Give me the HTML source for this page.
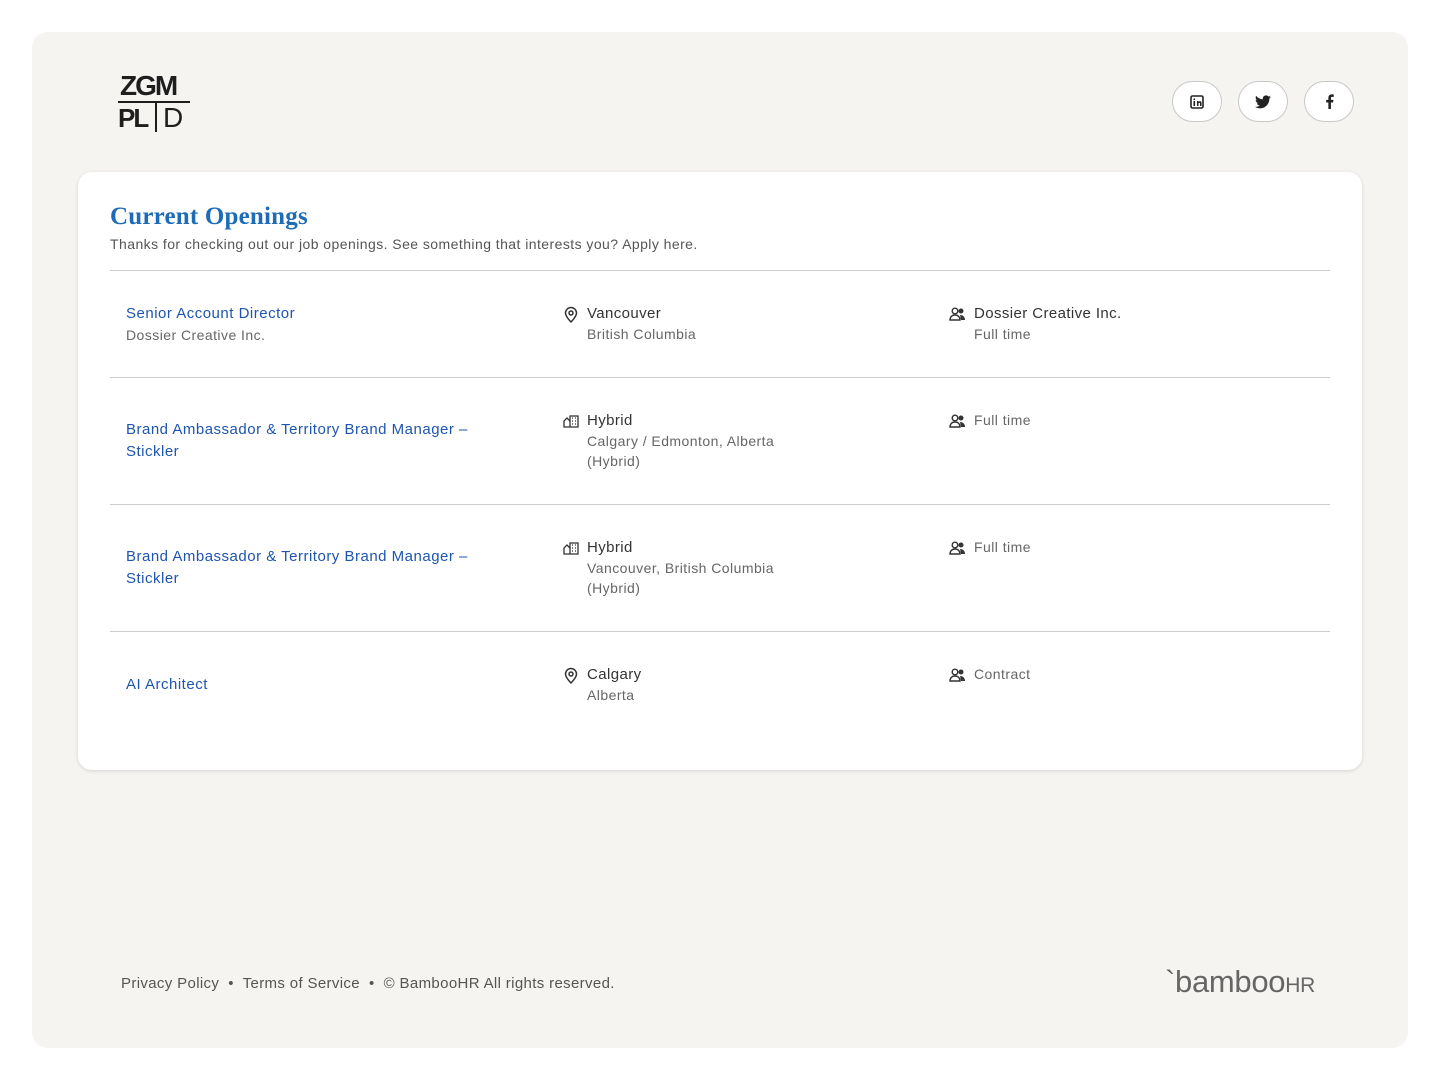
<!DOCTYPE html>
<html><head><meta charset="utf-8"><style>
*{box-sizing:border-box;margin:0;padding:0}
body{width:1440px;height:1080px;background:#fff;font-family:"Liberation Sans",sans-serif;position:relative;overflow:hidden}
.outer{position:absolute;left:32px;top:32px;width:1376px;height:1016px;background:#f5f4f1;border-radius:16px}
.logo{position:absolute;left:118px;top:72px;width:72px;height:60px;font-family:"Liberation Sans",sans-serif;font-weight:900;color:#1e1e1e}
.soc{position:absolute;top:81px;width:50px;height:41px;border:1px solid #c8c8c8;border-radius:21px;background:#fff;display:flex;align-items:center;justify-content:center}
.card{position:absolute;left:78px;top:172px;width:1284px;height:598px;background:#fff;border-radius:14px;box-shadow:0 1px 4px rgba(0,0,0,.12)}
h1{position:absolute;left:110px;top:203px;font-family:"Liberation Serif",serif;font-size:25px;color:#1e6cb6;font-weight:bold;letter-spacing:.2px}
.sub{position:absolute;left:110px;top:236px;font-size:14px;color:#555;letter-spacing:.44px}
.hr{position:absolute;left:110px;width:1220px;height:1px;background:#ccc}
.t{position:absolute;font-size:15px;color:#1e55b0;line-height:22px;letter-spacing:.5px}
.m{position:absolute;font-size:15px;color:#333;line-height:21px;letter-spacing:.4px}
.m span{color:#666;font-size:14px;display:block;line-height:20px;letter-spacing:.45px}
.ic{position:absolute}
.foot{position:absolute;left:121px;top:975px;font-size:15px;color:#555;letter-spacing:.35px}
.bam{position:absolute;left:1165px;top:964px;font-size:31px;color:#666;letter-spacing:-.3px}
</style></head><body>
<div class="outer"></div>
<div class="logo">
<div style="position:absolute;left:2px;top:0;font-size:28px;letter-spacing:-2px;line-height:28px">ZGM</div>
<div style="position:absolute;left:0;top:29px;width:72px;height:2px;background:#1e1e1e"></div>
<div style="position:absolute;left:0;top:32px;font-size:26px;letter-spacing:-2px;line-height:28px">PL</div>
<div style="position:absolute;left:37px;top:30px;width:2px;height:30px;background:#1e1e1e"></div>
<div style="position:absolute;left:45px;top:32px;font-size:28px;font-weight:400;line-height:28px">D</div>
</div>
<div class="soc" style="left:1172px"><svg width="14" height="14" viewBox="0 0 14 14"><rect x="1" y="1" width="12" height="12" rx="1.5" fill="none" stroke="#222" stroke-width="1.6"/><rect x="3.5" y="6" width="1.6" height="5" fill="#222"/><rect x="3.5" y="3.5" width="1.6" height="1.6" fill="#222"/><path d="M7 11V6h1.5v1c.5-1 3-1.5 3 1v3H10V8.5c0-1-1.5-1-1.5 0V11z" fill="#222"/></svg></div>
<div class="soc" style="left:1238px"><svg width="16" height="14" viewBox="0 0 24 20"><path d="M24 2.4a10 10 0 0 1-2.8.8A5 5 0 0 0 23.3.5a10 10 0 0 1-3.1 1.2A4.9 4.9 0 0 0 11.8 6 14 14 0 0 1 1.7.9a4.9 4.9 0 0 0 1.5 6.6A4.9 4.9 0 0 1 1 6.9a4.9 4.9 0 0 0 3.9 4.8 5 5 0 0 1-2.2.1 4.9 4.9 0 0 0 4.6 3.4A9.9 9.9 0 0 1 0 17.3 14 14 0 0 0 7.5 19.5c9 0 14-7.5 14-14v-.6A10 10 0 0 0 24 2.4z" fill="#222"/></svg></div>
<div class="soc" style="left:1304px"><svg width="9" height="15" viewBox="0 0 9 16"><path d="M6 16V9h2.3l.4-2.8H6V4.5c0-.8.3-1.4 1.4-1.4H9V.6C8.7.5 7.8.4 6.9.4 4.8.4 3.3 1.7 3.3 4v2.2H1V9h2.3v7z" fill="#222"/></svg></div>
<div class="card"></div>
<h1>Current Openings</h1>
<div class="sub">Thanks for checking out our job openings. See something that interests you? Apply here.</div>
<div class="hr" style="top:270px"></div>
<div class="hr" style="top:377px"></div>
<div class="hr" style="top:504px"></div>
<div class="hr" style="top:631px"></div>

<div class="t" style="left:126px;top:303px">Senior Account Director</div>
<div class="m" style="left:126px;top:325px"><span>Dossier Creative Inc.</span></div>
<div class="t" style="left:126px;top:419px">Brand Ambassador &amp; Territory Brand Manager –<br>Stickler</div>
<div class="t" style="left:126px;top:546px">Brand Ambassador &amp; Territory Brand Manager –<br>Stickler</div>
<div class="t" style="left:126px;top:674px">AI Architect</div>

<svg class="ic" style="left:564px;top:306px" width="14" height="17" viewBox="0 0 14 17"><path d="M7 16s-5.5-5.5-5.5-9a5.5 5.5 0 0 1 11 0c0 3.5-5.5 9-5.5 9z" fill="none" stroke="#333" stroke-width="1.5"/><circle cx="7" cy="7" r="2" fill="none" stroke="#333" stroke-width="1.5"/></svg>
<div class="m" style="left:587px;top:303px">Vancouver<span>British Columbia</span></div>
<svg class="ic" style="left:563px;top:415px" width="16" height="13" viewBox="0 0 16 13"><path d="M1 12V6l3-3 3 3v6zM7 12V1h8v11zM1 12h14" fill="none" stroke="#333" stroke-width="1.3"/><path d="M9 3h1M12 3h1M9 6h1M12 6h1M9 9h1M12 9h1" stroke="#333" stroke-width="1.3"/></svg>
<div class="m" style="left:587px;top:410px">Hybrid<span>Calgary / Edmonton, Alberta<br>(Hybrid)</span></div>
<svg class="ic" style="left:563px;top:542px" width="16" height="13" viewBox="0 0 16 13"><path d="M1 12V6l3-3 3 3v6zM7 12V1h8v11zM1 12h14" fill="none" stroke="#333" stroke-width="1.3"/><path d="M9 3h1M12 3h1M9 6h1M12 6h1M9 9h1M12 9h1" stroke="#333" stroke-width="1.3"/></svg>
<div class="m" style="left:587px;top:537px">Hybrid<span>Vancouver, British Columbia<br>(Hybrid)</span></div>
<svg class="ic" style="left:564px;top:667px" width="14" height="17" viewBox="0 0 14 17"><path d="M7 16s-5.5-5.5-5.5-9a5.5 5.5 0 0 1 11 0c0 3.5-5.5 9-5.5 9z" fill="none" stroke="#333" stroke-width="1.5"/><circle cx="7" cy="7" r="2" fill="none" stroke="#333" stroke-width="1.5"/></svg>
<div class="m" style="left:587px;top:664px">Calgary<span>Alberta</span></div>

<svg class="ic" style="left:949px;top:307px" width="17" height="14" viewBox="0 0 17 14"><circle cx="6" cy="4" r="2.8" fill="none" stroke="#333" stroke-width="1.4"/><path d="M1 13c0-3 2-5 5-5s5 2 5 5z" fill="none" stroke="#333" stroke-width="1.4"/><circle cx="12" cy="4" r="2.5" fill="#333"/><path d="M11 8c3 0 5 2 5 5h-4z" fill="#333"/></svg>
<div class="m" style="left:974px;top:303px">Dossier Creative Inc.<span>Full time</span></div>
<svg class="ic" style="left:949px;top:414px" width="17" height="14" viewBox="0 0 17 14"><circle cx="6" cy="4" r="2.8" fill="none" stroke="#333" stroke-width="1.4"/><path d="M1 13c0-3 2-5 5-5s5 2 5 5z" fill="none" stroke="#333" stroke-width="1.4"/><circle cx="12" cy="4" r="2.5" fill="#333"/><path d="M11 8c3 0 5 2 5 5h-4z" fill="#333"/></svg>
<div class="m" style="left:974px;top:410px"><span>Full time</span></div>
<svg class="ic" style="left:949px;top:541px" width="17" height="14" viewBox="0 0 17 14"><circle cx="6" cy="4" r="2.8" fill="none" stroke="#333" stroke-width="1.4"/><path d="M1 13c0-3 2-5 5-5s5 2 5 5z" fill="none" stroke="#333" stroke-width="1.4"/><circle cx="12" cy="4" r="2.5" fill="#333"/><path d="M11 8c3 0 5 2 5 5h-4z" fill="#333"/></svg>
<div class="m" style="left:974px;top:537px"><span>Full time</span></div>
<svg class="ic" style="left:949px;top:668px" width="17" height="14" viewBox="0 0 17 14"><circle cx="6" cy="4" r="2.8" fill="none" stroke="#333" stroke-width="1.4"/><path d="M1 13c0-3 2-5 5-5s5 2 5 5z" fill="none" stroke="#333" stroke-width="1.4"/><circle cx="12" cy="4" r="2.5" fill="#333"/><path d="M11 8c3 0 5 2 5 5h-4z" fill="#333"/></svg>
<div class="m" style="left:974px;top:664px"><span>Contract</span></div>

<div class="foot">Privacy Policy &nbsp;•&nbsp; Terms of Service &nbsp;•&nbsp; © BambooHR All rights reserved.</div>
<div class="bam">`bamboo<span style="font-size:21px">HR</span></div>
</body></html>
